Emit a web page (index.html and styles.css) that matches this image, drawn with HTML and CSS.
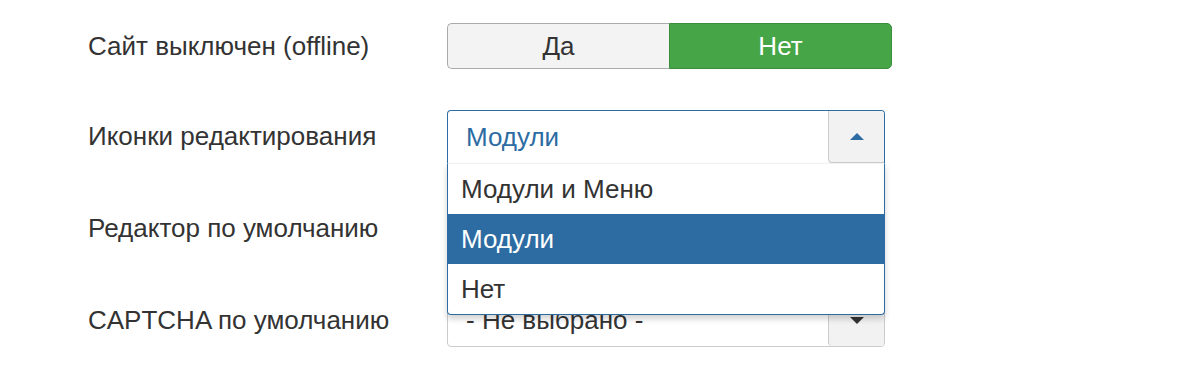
FILE: index.html
```html
<!DOCTYPE html>
<html>
<head>
<title>Глобальные настройки</title>
<meta charset="utf-8">
<link rel="stylesheet" href="styles.css">
</head>
<body>

<div class="settings">
    <div class="row row-toggle">
        <label class="row-label">Сайт выключен (offline)</label>
        <div class="toggle">
            <span class="toggle-btn">Да</span>
            <span class="toggle-btn active">Нет</span>
        </div>
    </div>

    <div class="row">
        <label class="row-label">Иконки редактирования</label>
        <div class="select open">
            <span class="select-value">Модули</span>
            <span class="select-arrow"><i class="caret up"></i></span>
            <ul class="select-drop">
                <li>Модули и Меню</li>
                <li class="highlighted">Модули</li>
                <li>Нет</li>
            </ul>
        </div>
    </div>

    <div class="row">
        <label class="row-label">Редактор по умолчанию</label>
        <!-- covered by the open list above -->
        <div class="select">
            <span class="select-value"></span>
            <span class="select-arrow"><i class="caret"></i></span>
        </div>
    </div>

    <div class="row">
        <label class="row-label">CAPTCHA по умолчанию</label>
        <div class="select">
            <span class="select-value">- Не выбрано -</span>
            <span class="select-arrow"><i class="caret"></i></span>
        </div>
    </div>
</div>

</body>
</html>
```

FILE: styles.css
```css
body {
    font-family: 'Liberation Sans', Arial, sans-serif;
    margin: 0;
    padding: 23px 0 0 88px;
    background-color: #ffffff;
    color: #333333;
    font-size: 26px;
}
.settings {
    width: 804px;
}
.row {
    display: flex;
    align-items: center;
    height: 53px;
    margin-bottom: 39px;
}
.row-toggle {
    height: 46px;
    margin-bottom: 41px;
}
.row-label {
    width: 359px;
    flex-shrink: 0;
}
.toggle {
    display: flex;
    width: 445px;
    height: 46px;
}
.toggle-btn {
    flex: 1;
    display: flex;
    align-items: center;
    justify-content: center;
    background-color: #f3f3f3;
    border: 1px solid #aaaaaa;
    border-right: none;
    border-radius: 5px 0 0 5px;
    box-sizing: border-box;
}
.toggle-btn.active {
    background-color: #46a546;
    border: 1px solid #3b8d3b;
    border-radius: 0 5px 5px 0;
    color: #ffffff;
}
.select {
    position: relative;
    display: flex;
    width: 438px;
    height: 53px;
    border: 1px solid #cccccc;
    border-radius: 4px;
    box-sizing: border-box;
    background-color: #ffffff;
}
.select-value {
    flex: 1;
    display: flex;
    align-items: center;
    padding-left: 18px;
}
.select-arrow {
    width: 55px;
    display: flex;
    align-items: center;
    justify-content: center;
    background-color: #f2f2f2;
    border-left: 1px solid #cccccc;
    border-radius: 0 3px 3px 4px;
}
.caret {
    width: 0;
    height: 0;
    border-left: 7px solid transparent;
    border-right: 7px solid transparent;
    border-top: 7px solid #333333;
}
.caret.up {
    border-top: none;
    border-bottom: 7px solid #2d6ca2;
}
.select.open {
    border-color: #2d6ca2;
    border-bottom: none;
    border-radius: 4px 4px 0 0;
    z-index: 2;
}
.select.open .select-value {
    color: #2d6ca2;
}
.select.open .select-arrow {
    border-bottom: 1px solid #cccccc;
    border-radius: 0 3px 0 4px;
}
.select-drop {
    position: absolute;
    top: 100%;
    left: -1px;
    right: -1px;
    margin: 0;
    padding: 0;
    list-style: none;
    background-color: #ffffff;
    border: 1px solid #2d6ca2;
    border-top: 1px solid #f2f2f2;
    border-radius: 0 0 4px 4px;
    box-shadow: 0 4px 6px rgba(0, 0, 0, 0.18);
}
.select-drop li {
    height: 50px;
    display: flex;
    align-items: center;
    padding-left: 13px;
}
.select-drop li.highlighted {
    background-color: #2d6ca2;
    color: #ffffff;
}
```
